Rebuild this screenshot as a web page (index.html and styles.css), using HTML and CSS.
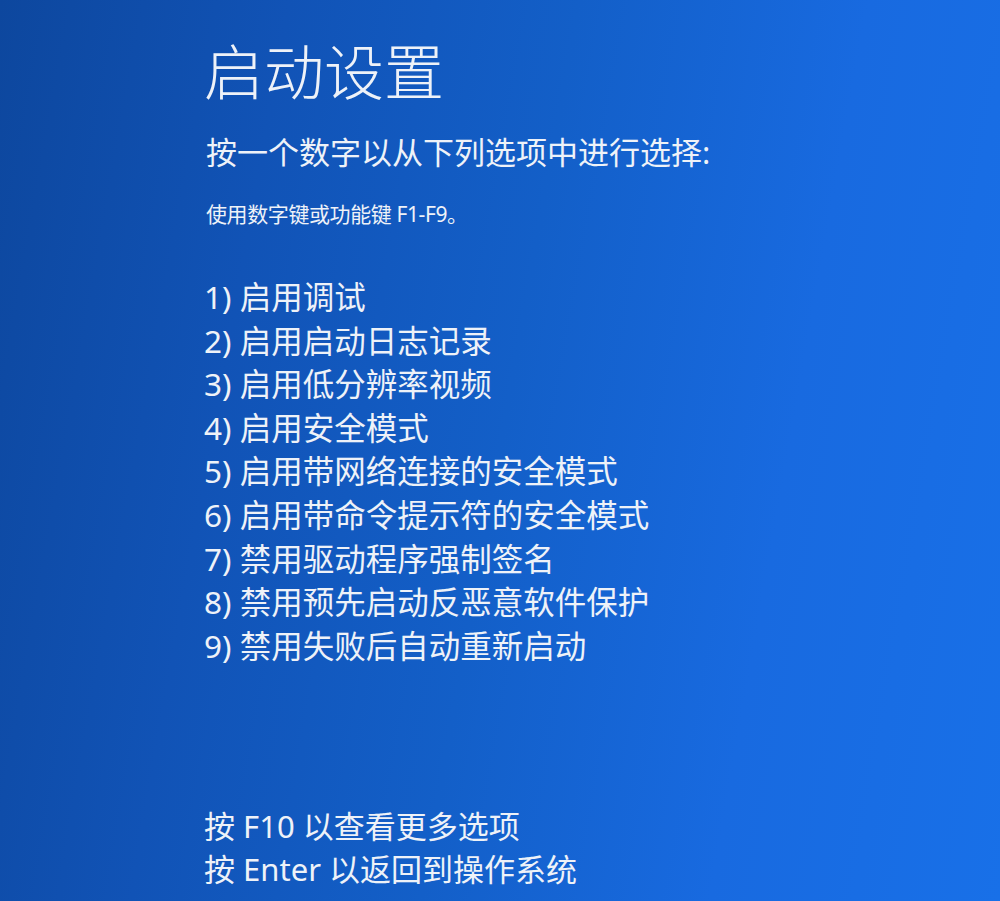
FILE: index.html
```html
<!DOCTYPE html>
<html lang="zh-CN">
<head>
<meta charset="utf-8">
<title>启动设置</title>
<link rel="stylesheet" href="styles.css">
</head>
<body>
<main class="screen">
  <h1 class="title">启动设置</h1>
  <p class="prompt">按一个数字以从下列选项中进行选择:</p>
  <p class="hint">使用数字键或功能键 F1-F9。</p>
  <ol class="options">
    <li>1) 启用调试</li>
    <li>2) 启用启动日志记录</li>
    <li>3) 启用低分辨率视频</li>
    <li>4) 启用安全模式</li>
    <li>5) 启用带网络连接的安全模式</li>
    <li>6) 启用带命令提示符的安全模式</li>
    <li>7) 禁用驱动程序强制签名</li>
    <li>8) 禁用预先启动反恶意软件保护</li>
    <li>9) 禁用失败后自动重新启动</li>
  </ol>
  <div class="footer">
    <p>按 F10 以查看更多选项</p>
    <p>按 Enter 以返回到操作系统</p>
  </div>
</main>
</body>
</html>
```
FILE: styles.css
```css
html, body {
  margin: 0;
  padding: 0;
  height: 100%;
}
body {
  background: linear-gradient(100deg, #0d479e 0%, #1153b6 25%, #135fc8 50%, #186ae0 75%, #1870e8 100%);
  color: #eef2f8;
  font-family: "Noto Sans", "Noto Sans CJK SC", sans-serif;
  overflow: hidden;
}
.screen {
  display: flex;
  flex-direction: column;
  padding: 34px 0 0 204px;
  height: 901px;
  box-sizing: border-box;
}
.title {
  margin: 0;
  font-size: 60px;
  font-weight: 300;
  line-height: 76px;
  letter-spacing: 0;
}
.prompt {
  margin: 20px 0 0 2px;
  font-size: 31px;
  font-weight: 400;
  line-height: 44px;
}
.hint {
  margin: 25px 0 0 2px;
  font-size: 21px;
  line-height: 30px;
  letter-spacing: -0.4px;
}
.options {
  list-style: none;
  margin: 46px 0 0 0;
  padding: 0;
  display: flex;
  flex-direction: column;
}
.options li {
  font-size: 31.5px;
  line-height: 43.6px;
}
.footer {
  margin-top: auto;
  margin-bottom: 10px;
}
.footer p {
  margin: 0;
  font-size: 31px;
  line-height: 43px;
}
```
